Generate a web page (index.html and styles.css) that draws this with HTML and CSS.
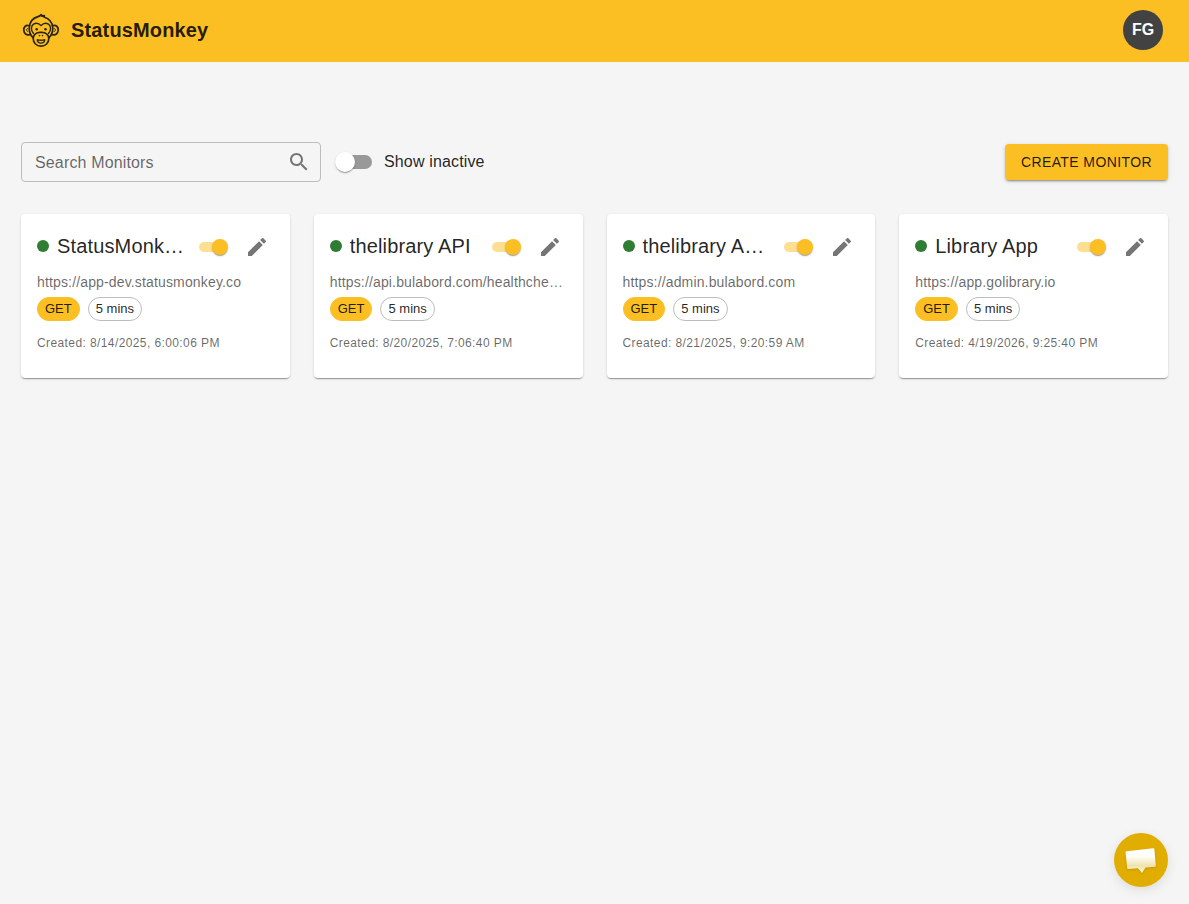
FILE: index.html
```html
<!DOCTYPE html>
<html lang="en">
<head>
<meta charset="utf-8">
<title>StatusMonkey</title>
<link rel="stylesheet" href="styles.css">
</head>
<body>
<svg class="defs" width="0" height="0"><symbol id="pencil" viewBox="0 0 24 24"><path d="M3 17.25V21h3.750L17.810 9.940l-3.750-3.750zM20.710 7.040c.39-.39.39-1.020 0-1.410l-2.340-2.340a.996.996 0 0 0-1.410 0l-1.830 1.830 3.750 3.750z"/></symbol></svg>
<header class="appbar">
  <svg class="logo" viewBox="0 0 40 40" fill="none" stroke="#2b2412" stroke-width="1.7" stroke-linecap="round" stroke-linejoin="round">
    <path d="M11.800 27.500C9 24.500 8 20.500 8.300 17.500C8.800 11.500 12.500 7.800 17 6.600C18.500 6.200 19.500 5.500 20.300 4.600L20.800 6.100L23.300 5.700L23 7C28 8.500 31.300 12 31.700 17.500C32 20.500 31 24.500 28.200 27.500"/>
    <path d="M8.300 15.800C5 14.300 2.600 17 2.800 20.300C3 23.500 5.500 25.600 8.500 24.600M31.700 15.800C35 14.300 37.400 17 37.200 20.300C37 23.500 34.500 25.600 31.500 24.600"/>
    <path d="M6.900 18.500C5 18.300 5 21.300 6.900 21.600M33.100 18.500C35 18.300 35 21.300 33.100 21.600" stroke-width="1"/>
    <path d="M12.500 23.500C9.800 20.500 9.700 16 12.500 14.200C15 12.600 18 13.300 20 15.600C22 13.300 25 12.600 27.500 14.200C30.300 16 30.200 20.500 27.500 23.500" stroke-width="1.400"/>
    <path d="M20 22.400C15.500 22 12.200 24.500 12.200 28.600C12.200 33 15.500 36.100 20 36.100C24.500 36.100 27.800 33 27.800 28.600C27.800 24.500 24.500 22 20 22.400Z"/>
    <path d="M16.300 29.700C18.500 30.400 21.500 30.400 23.700 29.700C23.800 31.700 22.200 33.100 20 33.100C17.800 33.100 16.200 31.700 16.300 29.700Z" stroke-width="1.400"/>
    <g fill="#2b2412" stroke="none"><circle cx="15.700" cy="19.300" r="1.250"/><circle cx="24.500" cy="19.300" r="1.250"/><circle cx="18.500" cy="25.600" r=".8"/><circle cx="21.500" cy="25.600" r=".8"/></g>
  </svg>
  <span class="brand">StatusMonkey</span>
  <span class="avatar">FG</span>
</header>
<main class="page">
  <div class="toolbar">
    <div class="search"><span>Search Monitors</span>
      <svg class="icon" viewBox="0 0 24 24"><path d="M15.500 14h-.79l-.28-.27C15.410 12.590 16 11.110 16 9.500 16 5.910 13.090 3 9.500 3S3 5.910 3 9.500 5.910 16 9.500 16c1.610 0 3.090-.59 4.230-1.570l.27.28v.79l5 4.990L20.490 19zm-6 0C7.010 14 5 11.990 5 9.500S7.010 5 9.500 5 14 7.010 14 9.500 11.990 14 9.500 14"/></svg>
    </div>
    <div class="toggle"><span class="switch"></span><span>Show inactive</span></div>
    <button class="create">CREATE MONITOR</button>
  </div>
  <section class="grid">
    <article class="card">
      <div class="head"><i class="dot"></i><h2>StatusMonk…</h2><span class="switch small"></span><svg class="icon"><use href="#pencil"/></svg></div>
      <p class="url">https://app-dev.statusmonkey.co</p>
      <div class="chips"><span class="chip method">GET</span><span class="chip">5 mins</span></div>
      <p class="created">Created: 8/14/2025, 6:00:06 PM</p>
    </article>
    <article class="card">
      <div class="head"><i class="dot"></i><h2>thelibrary API</h2><span class="switch small"></span><svg class="icon"><use href="#pencil"/></svg></div>
      <p class="url">https://api.bulabord.com/healthche…</p>
      <div class="chips"><span class="chip method">GET</span><span class="chip">5 mins</span></div>
      <p class="created">Created: 8/20/2025, 7:06:40 PM</p>
    </article>
    <article class="card">
      <div class="head"><i class="dot"></i><h2>thelibrary A…</h2><span class="switch small"></span><svg class="icon"><use href="#pencil"/></svg></div>
      <p class="url">https://admin.bulabord.com</p>
      <div class="chips"><span class="chip method">GET</span><span class="chip">5 mins</span></div>
      <p class="created">Created: 8/21/2025, 9:20:59 AM</p>
    </article>
    <article class="card">
      <div class="head"><i class="dot"></i><h2>Library App</h2><span class="switch small"></span><svg class="icon"><use href="#pencil"/></svg></div>
      <p class="url">https://app.golibrary.io</p>
      <div class="chips"><span class="chip method">GET</span><span class="chip">5 mins</span></div>
      <p class="created">Created: 4/19/2026, 9:25:40 PM</p>
    </article>
  </section>
</main>
<div class="chat">
  <svg viewBox="0 0 54 54">
    <defs><linearGradient id="bubble" x1="0" y1="0" x2="0" y2="1"><stop offset="0" stop-color="#fff"/><stop offset=".35" stop-color="#fffdf5"/><stop offset=".7" stop-color="#f0e2ae"/><stop offset="1" stop-color="#fff8df"/></linearGradient></defs>
    <path d="M12.500 18.300L39 15.200Q40.200 15 40.400 16.200L41.800 32.500Q41.900 33.700 40.700 33.800L31.500 34.500L28 40L24 35.300L14.500 36Q13.300 36.100 13.200 34.900L11.500 19.500Q11.400 18.400 12.500 18.300Z" fill="url(#bubble)"/>
  </svg>
</div>
</body>
</html>
```
FILE: styles.css
```css
* { box-sizing: border-box; }
body { margin: 0; min-height: 904px; background: #f5f5f5; color: rgba(0,0,0,.87); font-family: "Liberation Sans", Arial, sans-serif; font-size: 16px; }
.defs { position: absolute; }
h2, p { margin: 0; }
.appbar { height: 62px; padding: 0 26px 2px 21px; display: flex; align-items: center; background: #fbbf24; }
.logo { width: 40px; height: 40px; }
.brand { margin-left: 10px; font-size: 20px; font-weight: 700; line-height: 32px; letter-spacing: .15px; }
.avatar { width: 40px; height: 40px; margin-left: auto; border-radius: 50%; background: #424242; color: #fff; font-weight: 700; display: flex; align-items: center; justify-content: center; }
.page { padding: 80px 21px 0; }
.toolbar { height: 40px; display: flex; align-items: center; }
.search { width: 300px; height: 40px; padding: 0 9px 0 13px; border: 1px solid #bcbcbc; border-radius: 4px; display: flex; align-items: center; justify-content: space-between; color: rgba(0,0,0,.6); letter-spacing: .15px; }
.search span { padding-top: 2px; }
.icon { width: 24px; height: 24px; flex: none; fill: #757575; }
.toggle { display: flex; align-items: center; margin-left: 5px; line-height: 24px; letter-spacing: .15px; }
.toggle > span + span { padding-bottom: 1px; }
.switch { width: 58px; height: 38px; padding: 12px; flex: none; display: block; position: relative; }
.switch::before { content: ""; display: block; height: 100%; border-radius: 7px; background: #999; }
.switch::after { content: ""; position: absolute; top: 9px; left: 9px; width: 20px; height: 20px; border-radius: 50%; background: #fff; box-shadow: 0 2px 1px -1px rgba(0,0,0,.2), 0 1px 1px rgba(0,0,0,.14), 0 1px 3px rgba(0,0,0,.12); }
.switch.small { width: 40px; height: 24px; padding: 7px; }
.switch.small::before { background: #fddf91; }
.switch.small::after { top: 4px; left: 20px; width: 16px; height: 16px; background: #fbbf24; }
.create { margin-left: auto; padding: 6px 16px; border: 0; border-radius: 4px; background: #fbbf24; color: rgba(0,0,0,.87); font: 14px/24.5px "Liberation Sans", Arial, sans-serif; letter-spacing: .4px; box-shadow: 0 3px 1px -2px rgba(0,0,0,.2), 0 2px 2px rgba(0,0,0,.14), 0 1px 5px rgba(0,0,0,.12); }
.grid { margin-top: 32px; display: grid; grid-template-columns: repeat(4, minmax(0, 1fr)); gap: 24px; }
.card { height: 164px; padding: 16px; background: #fff; border-radius: 4px; box-shadow: 0 2px 1px -1px rgba(0,0,0,.2), 0 1px 1px rgba(0,0,0,.14), 0 1px 3px rgba(0,0,0,.12); }
.head { height: 34px; display: flex; align-items: center; gap: 8px; padding-right: 5px; }
.head .dot { margin-bottom: 2px; }
.dot { width: 12px; height: 12px; flex: none; border-radius: 50%; background: #2e7d32; }
h2 { flex: 1; min-width: 0; margin-bottom: 2px; font-size: 20px; font-weight: 400; line-height: 32px; letter-spacing: .15px; white-space: nowrap; }
.head .icon { margin-left: 5px; }
.url { margin-top: 8px; font-size: 14px; line-height: 20px; letter-spacing: .15px; color: rgba(0,0,0,.6); white-space: nowrap; }
.chips { display: flex; gap: 8px; margin-top: 5px; }
.chip { height: 24px; padding: 0 7px; border: 1px solid #bdbdbd; border-radius: 12px; font-size: 13px; line-height: 22px; }
.chip.method { border-color: #fbbf24; background: #fbbf24; }
.created { margin-top: 12px; font-size: 12px; line-height: 20px; letter-spacing: .4px; color: rgba(0,0,0,.6); }
.chat { position: fixed; right: 21px; bottom: 17px; width: 54px; height: 54px; border-radius: 50%; background: #e1ad01; box-shadow: 0 3px 12px rgba(0,0,0,.1); }
.chat svg { display: block; filter: drop-shadow(0 1px 1px rgba(120,90,0,.25)); }
```
